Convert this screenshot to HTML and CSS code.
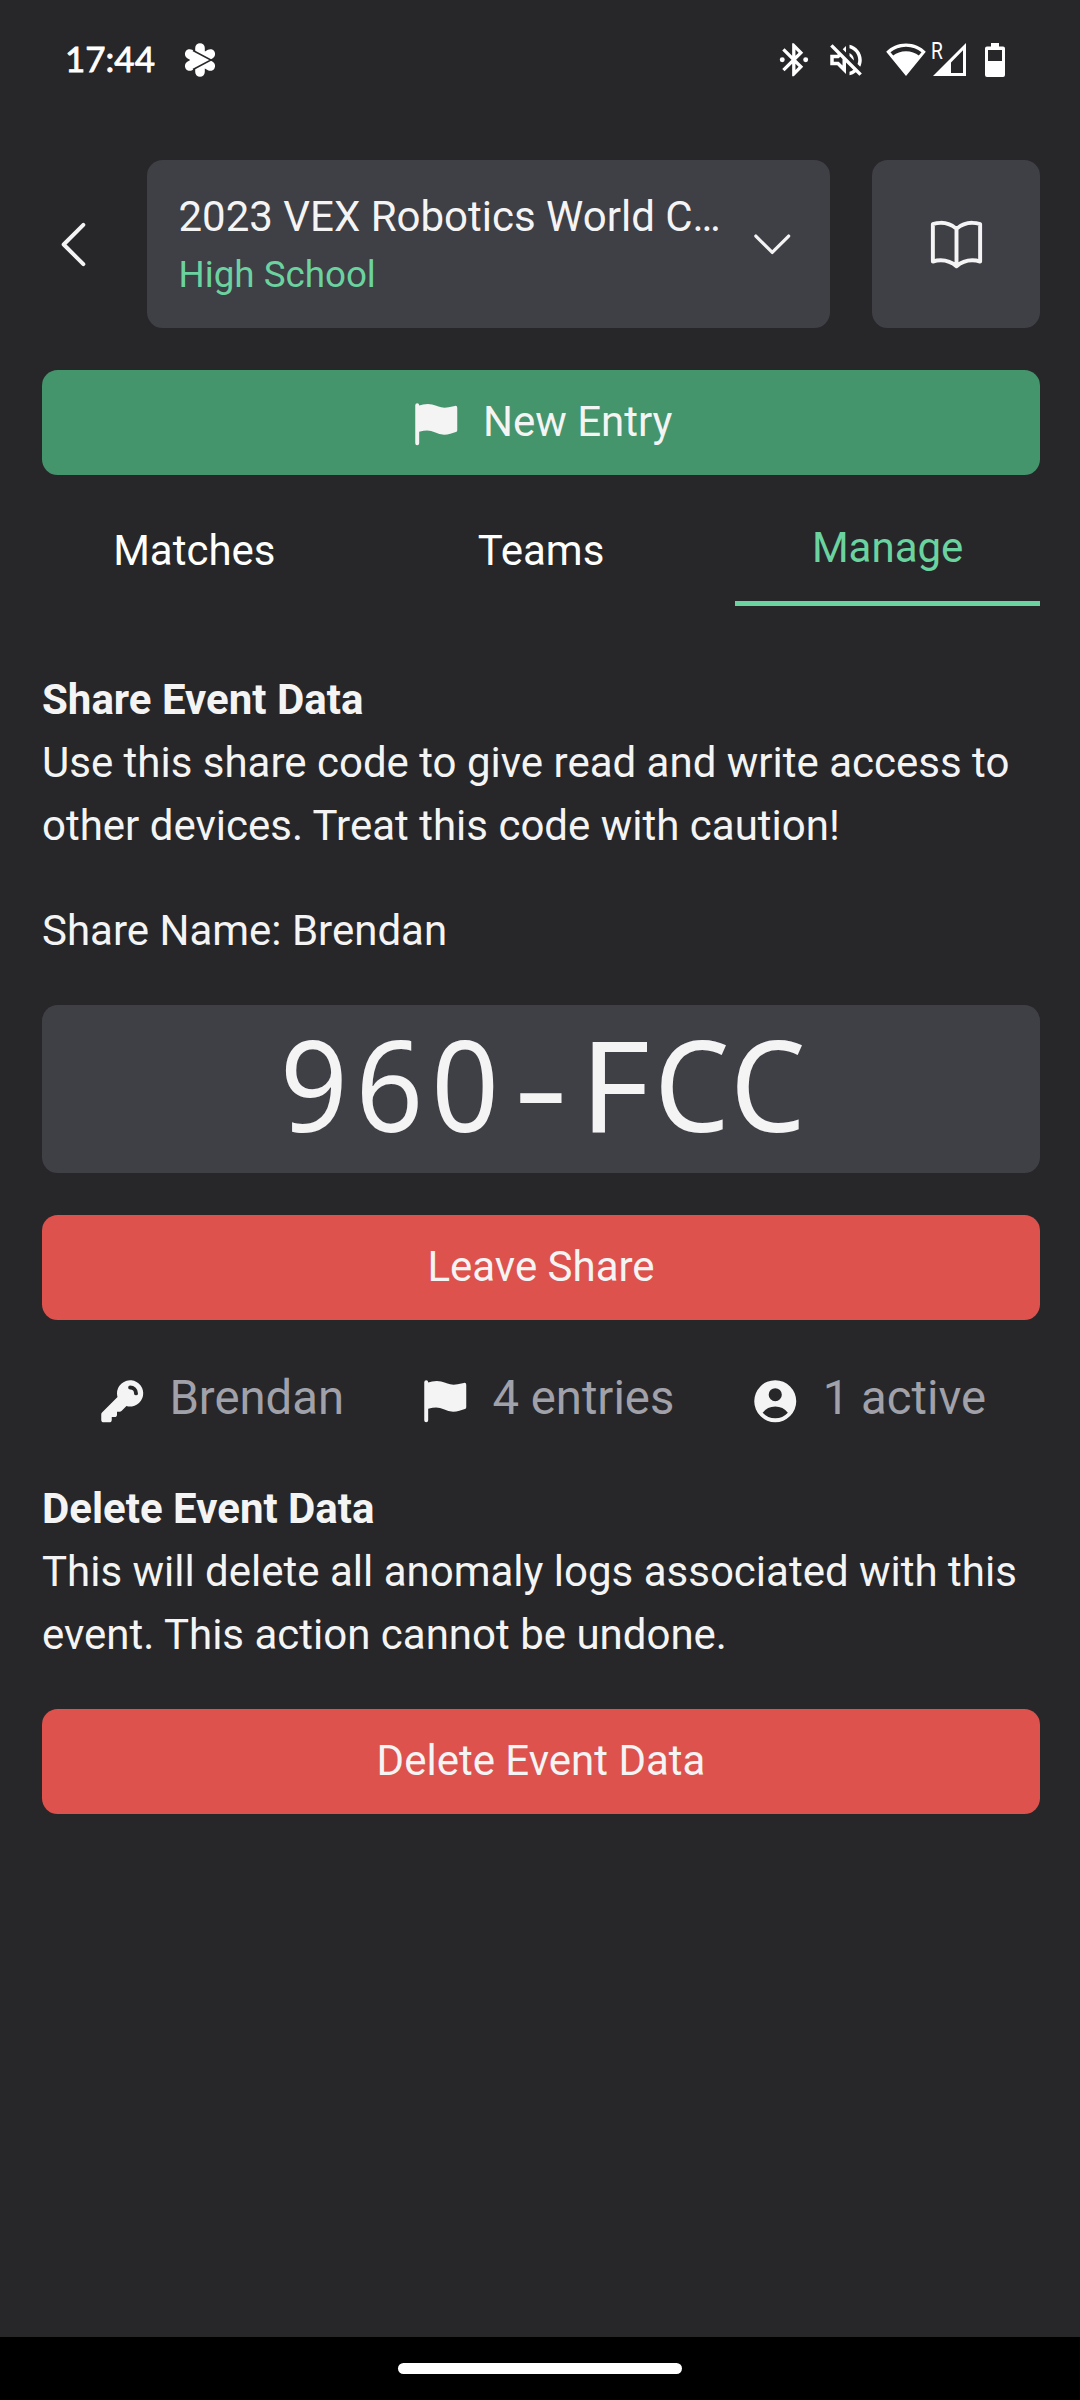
FILE: index.html
```html
<!DOCTYPE html>
<html lang="en">
<head>
<meta charset="utf-8">
<title>Manage event</title>
<link rel="stylesheet" href="styles.css">
</head>
<body>
<div class="status">
  <span class="clock">17:44</span>
  <svg class="flower" viewBox="-17 -17 34 34"><g fill="#fff"><circle r="8"/><g stroke="#fff" stroke-width="9.6" stroke-linecap="round"><path d="M0-12V12M-10.3-6 10.3 6M-10.3 6 10.3-6"/></g></g><path d="M-7-9.500 11 0-7 9.500" fill="none" stroke="#27272a" stroke-width="1.5"/></svg>
  <div class="tray">
    <svg class="bt" viewBox="0 0 24 24"><path d="M17.71 7.71 12 2h-1v7.59L6.41 5 5 6.41 10.59 12 5 17.59 6.41 19 11 14.41V22h1l5.71-5.71-4.3-4.29zM13 5.83l1.88 1.88L13 9.59zm1.88 10.46L13 18.17v-3.76z"/><circle cx="5" cy="12" r="1.5"/><circle cx="19.2" cy="12" r="1.5"/></svg>
    <svg class="mute" viewBox="0 0 24 24"><path d="M4.34 2.93 2.93 4.34 7.29 8.7 7 9H3v6h4l5 5v-6.59l4.18 4.18c-.65.49-1.38.88-2.18 1.11v2.06c1.34-.3 2.57-.92 3.61-1.75l2.05 2.05 1.41-1.41zM10 15.17 7.83 13H5v-2h2.83l.88-.88L10 11.41zM19 12c0 .82-.15 1.61-.41 2.34l1.53 1.53c.56-1.17.88-2.48.88-3.87 0-4.28-2.99-7.86-7-8.77v2.06c2.89.86 5 3.54 5 6.71zm-7-8-1.88 1.88L12 7.76zm4.5 8c0-1.77-1.02-3.29-2.5-4.03v1.79l2.48 2.48z"/></svg>
    <svg class="wifi" viewBox="0 0 40 34"><path fill-rule="evenodd" d="M20 33 .2 8.8C5 3.800 12 .6 20 .6S35 3.800 39.800 8.800zM4.500 9.300 7.200 12.500C10.500 9.800 15 8.200 20 8.200s9.500 1.600 12.800 4.300l2.700-3.200C31.500 5.900 26 3.800 20 3.800S8.500 5.900 4.500 9.300z"/></svg>
    <div class="cell"><span class="roam">R</span><svg viewBox="0 0 34 34"><path fill-rule="evenodd" d="M0 33 33 0v33zM18 19.500V30h12V7.200z"/></svg></div>
    <svg class="batt" viewBox="0 0 20 34"><path fill-rule="evenodd" d="M6 0h8v3.500h4q2 0 2 2V32q0 2-2 2H2q-2 0-2-2V5.500q0-2 2-2h4zM3 7v11h14V7z"/></svg>
  </div>
</div>

<main>
  <header class="top">
    <svg class="line i24" viewBox="0 0 24 24"><path d="M15.75 19.5 8.25 12l7.5-7.5"/></svg>
    <div class="picker">
      <div class="names"><div class="title">2023 VEX Robotics World C…</div><div class="division">High School</div></div>
      <svg class="line i20" viewBox="0 0 24 24"><path d="m19.5 8.25-7.5 7.5-7.5-7.5"/></svg>
    </div>
    <div class="rules"><svg class="line i24" viewBox="0 0 24 24"><path d="M12 6.042A8.967 8.967 0 0 0 6 3.75c-1.052 0-2.062.18-3 .512v14.25A8.987 8.987 0 0 1 6 18c2.305 0 4.408.867 6 2.292m0-14.25a8.966 8.966 0 0 1 6-2.292c1.052 0 2.062.18 3 .512v14.25A8.987 8.987 0 0 0 18 18a8.967 8.967 0 0 0-6 2.292m0-14.25v14.25"/></svg></div>
  </header>

  <div class="btn new"><svg class="solid i20" viewBox="0 0 20 20"><path d="M3.5 2.75a.75.75 0 0 0-1.5 0v14.5a.75.75 0 0 0 1.5 0v-4.392l1.657-.348a6.449 6.449 0 0 1 4.271.572 7.948 7.948 0 0 0 5.965.524l2.078-.64A.75.75 0 0 0 18 12.25v-8.5a.75.75 0 0 0-.904-.734l-2.38.501a7.25 7.25 0 0 1-4.186-.363l-.502-.2a8.75 8.75 0 0 0-5.053-.439l-1.475.31V2.75Z"/></svg><span>New Entry</span></div>

  <nav class="tabs"><div class="tab">Matches</div><div class="tab">Teams</div><div class="tab on">Manage</div></nav>

  <section class="share">
    <h2>Share Event Data</h2>
    <p>Use this share code to give read and write access to other devices. Treat this code with caution!</p>
    <p class="name">Share Name: Brendan</p>
    <div class="code"><span class="digits">960</span><span class="dash">-</span><span class="f">F</span><span class="c">C</span><span class="c">C</span></div>
    <div class="btn danger">Leave Share</div>
    <div class="stats">
      <div class="stat"><svg class="solid i20" viewBox="0 0 20 20"><path fill-rule="evenodd" d="M8 7a5 5 0 1 1 3.61 4.804l-1.903 1.903A1 1 0 0 1 9 14H8v1a1 1 0 0 1-1 1H6v1a1 1 0 0 1-1 1H3a1 1 0 0 1-1-1v-2a1 1 0 0 1 .293-.707L8.196 8.39A5.002 5.002 0 0 1 8 7Zm5-3a.75.75 0 0 0 0 1.5A1.5 1.5 0 0 1 14.5 7 .75.75 0 0 0 16 7a3 3 0 0 0-3-3Z"/></svg><span>Brendan</span></div>
      <div class="stat"><svg class="solid i20" viewBox="0 0 20 20"><path d="M3.5 2.75a.75.75 0 0 0-1.5 0v14.5a.75.75 0 0 0 1.5 0v-4.392l1.657-.348a6.449 6.449 0 0 1 4.271.572 7.948 7.948 0 0 0 5.965.524l2.078-.64A.75.75 0 0 0 18 12.25v-8.5a.75.75 0 0 0-.904-.734l-2.38.501a7.25 7.25 0 0 1-4.186-.363l-.502-.2a8.75 8.75 0 0 0-5.053-.439l-1.475.31V2.75Z"/></svg><span>4 entries</span></div>
      <div class="stat"><svg class="solid i20" viewBox="0 0 20 20"><path fill-rule="evenodd" d="M18 10a8 8 0 1 1-16 0 8 8 0 0 1 16 0Zm-5.5-2.5a2.5 2.5 0 1 1-5 0 2.5 2.5 0 0 1 5 0ZM10 12a5.990 5.990 0 0 0-4.793 2.390A6.483 6.483 0 0 0 10 16.500a6.483 6.483 0 0 0 4.793-2.110A5.990 5.990 0 0 0 10 12Z"/></svg><span>1 active</span></div>
    </div>
  </section>

  <section class="delete">
    <h2>Delete Event Data</h2>
    <p>This will delete all anomaly logs associated with this event. This action cannot be undone.</p>
    <div class="btn danger">Delete Event Data</div>
  </section>
</main>
<footer class="navbar"><div class="pill"></div></footer>
</body>
</html>
```
FILE: styles.css
```css
* { box-sizing: border-box; }
body { margin: 0; width: 1080px; height: 2400px; display: flex; flex-direction: column; background: #27272a; color: #f4f4f5; font: 42px/63px Roboto, sans-serif; overflow: hidden; }
h2, p { margin: 0; font-size: inherit; }
h2 { font-weight: 700; }
svg { display: block; flex: none; }

.status { height: 118px; display: flex; align-items: center; padding: 1px 75px 0 65px; color: #fff; }
.clock { font: 400 35px/40px Lato, sans-serif; -webkit-text-stroke: .8px #fff; width: 118px; padding-bottom: 3px; height: 43px; }
.flower { width: 34px; height: 34px; }
.tray { display: flex; align-items: center; margin-left: auto; fill: #fff; }
.bt { width: 39.6px; height: 39.6px; margin-right: 11px; }
.mute { width: 42px; height: 42px; margin-right: 19px; }
.wifi { width: 40px; height: 34px; margin-right: 7px; }
.cell { display: flex; position: relative; margin-right: 18px; }
.cell svg { width: 34px; height: 34px; }
.roam { position: absolute; left: -2px; top: -2px; font: 24px/20px Roboto, sans-serif; transform: scaleX(.8); transform-origin: left; }
.batt { width: 20px; height: 34px; }

main { flex: 1; padding: 42px 40px 0 42px; }
.i24 { width: 63px; height: 63px; }
.i20 { width: 52.5px; height: 52.5px; }
.line { fill: none; stroke: #f4f4f5; stroke-width: 1.5; stroke-linecap: round; stroke-linejoin: round; }
.solid { fill: #f4f4f5; position: relative; top: 2px; }

.top { display: flex; align-items: center; height: 168px; }
.picker { width: 683px; height: 168px; margin: 0 42px; display: flex; align-items: center; justify-content: space-between; padding: 0 31.5px; background: #3f3f46; border-radius: 15.75px; }
.names { white-space: nowrap; margin-top: -1px; }
.division { font-size: 36.75px; line-height: 52.5px; padding-top: 1px; color: #6bd3a0; }
.rules { flex: 1; height: 168px; display: flex; align-items: center; justify-content: center; background: #3f3f46; border-radius: 15.75px; }

.btn { height: 105px; display: flex; align-items: center; justify-content: center; gap: 21px; padding-bottom: 2px; border-radius: 15.75px; }
.new { margin-top: 42px; background: #44946c; }
.new .solid { top: 3px; }
.danger { background: #dd524d; }

.tabs { display: grid; grid-template-columns: repeat(3, 1fr); gap: 42px; margin-top: 41px; height: 90px; text-align: center; color: #fff; }
.tab { padding-top: 3px; }
.on { padding-top: 0; color: #6bd3a0; border-bottom: 5px solid #6bd3a0; }

.share { margin-top: 62px; }
.name { margin: 42px 0 43px; }
.code { height: 168px; margin-bottom: 42px; display: flex; align-items: center; justify-content: center; padding-bottom: 11px; background: #3f3f46; border-radius: 15.75px; font: 126px/157px "Noto Sans", sans-serif; }
.code span { width: 75.6px; text-align: center; }
.code .digits { width: 226.8px; text-align: left; letter-spacing: 8.4px; transform: translateX(3.9px) scaleX(.94); transform-origin: left; }
.code .dash { transform: scaleX(1.35); }
.code .f { transform: translateX(-2px) scaleX(1.08); }
.code .c { display: flex; justify-content: center; transform: scaleX(.95); }
.stats { height: 73.5px; margin: 42px 0 41.5px; display: flex; justify-content: center; gap: 75px; font-size: 47.25px; line-height: 73.5px; color: #a1a1aa; }
.stat { display: flex; align-items: center; gap: 21px; }
.delete p { margin-bottom: 43px; }

.navbar { height: 63px; display: flex; align-items: center; justify-content: center; background: #000; }
.pill { width: 284px; height: 11px; border-radius: 6px; background: #fff; }
```
